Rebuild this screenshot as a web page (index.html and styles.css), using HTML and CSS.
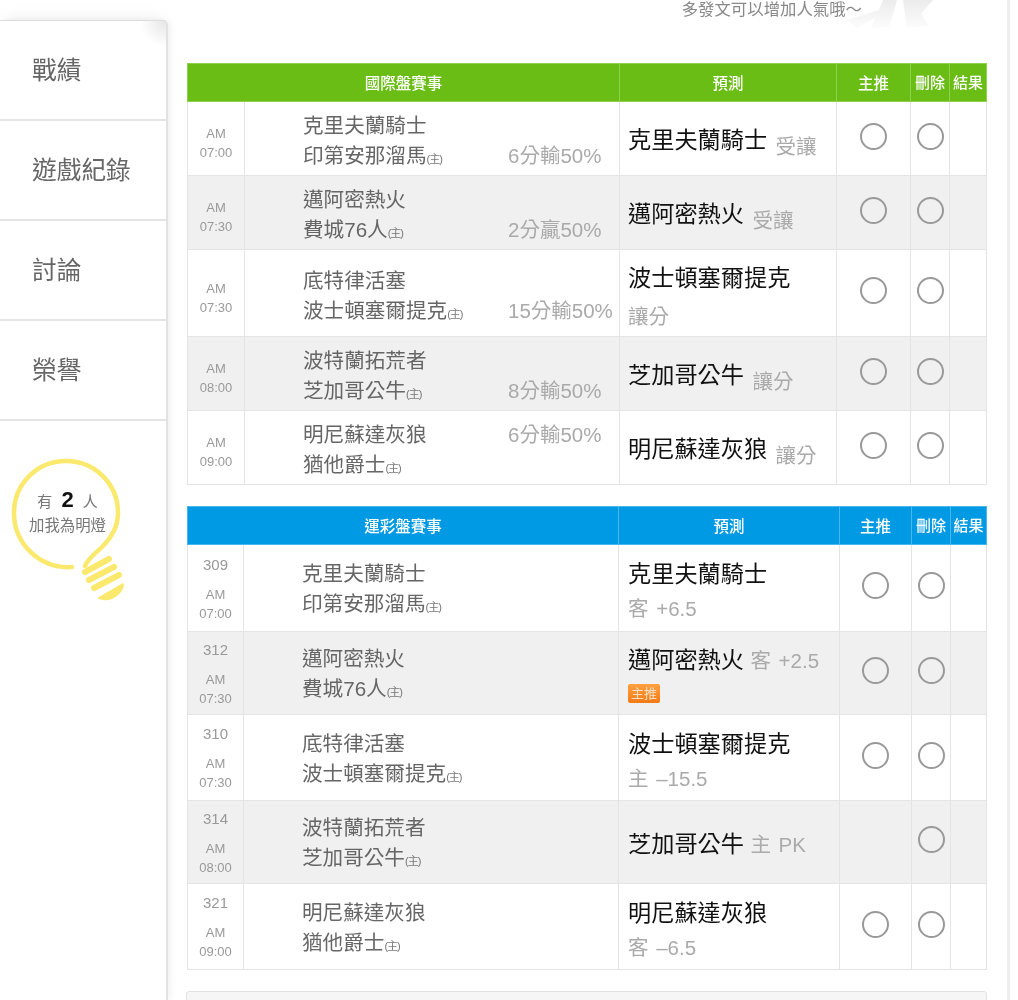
FILE: index.html
```html
<!DOCTYPE html>
<html lang="zh-Hant">
<head>
<meta charset="utf-8">
<title>賽事預測</title>
<link rel="stylesheet" href="styles.css">
</head>
<body>
<div class="page">
  <aside class="side">
    <nav class="menu">
      <a class="item">戰績</a>
      <a class="item">遊戲紀錄</a>
      <a class="item">討論</a>
      <a class="item">榮譽</a>
    </nav>
    <div class="bulb">
      <svg class="bulb-svg" width="130" height="160" viewBox="0 0 130 160" aria-hidden="true">
        <path d="M72 123 C 40 125 14 100 14 69 C 14 40 37 17 66 17 C 95 17 118 40 118 69 C 118 84 111 94 102 103 C 96 109 89 113 85 122" fill="none" stroke="#fbe96e" stroke-width="4.5" stroke-linecap="round"/>
        <g fill="none" stroke="#fbe96e" stroke-width="6" stroke-linecap="round">
          <path d="M85 128 L109 115"/>
          <path d="M89 136 L114 123"/>
          <path d="M94 144 L119 131"/>
        </g>
        <path d="M99 154 L123 140 C 123 148 112 157 103 155 Z" fill="#fbe96e" stroke="#fbe96e" stroke-width="2" stroke-linejoin="round"/>
      </svg>
      <p class="bulb-count"><span>有</span><b>2</b><span>人</span></p>
      <p class="bulb-label">加我為明燈</p>
    </div>
  </aside>

  <main class="main">
    <div class="note">
      <svg class="mark" width="100" height="32" viewBox="0 0 100 32" aria-hidden="true">
        <defs><linearGradient id="fade" x1="0" y1="0" x2="0" y2="1"><stop offset="0" stop-color="#ececec"/><stop offset="1" stop-color="#fcfcfc"/></linearGradient></defs>
        <path d="M2 20 L34 10 L30 18 L12 28 Z M38 0 L52 0 L44 28 L26 28 Z M58 0 L88 0 L76 14 L84 26 L62 28 Z" fill="url(#fade)"/>
      </svg>
      <span class="note-text">多發文可以增加人氣哦～</span>
    </div>

    <table class="games green">
      <colgroup><col class="c1"><col class="c2"><col class="c3"><col class="c4"><col class="c5"><col class="c6"></colgroup>
      <thead><tr><th colspan="2">國際盤賽事</th><th>預測</th><th>主推</th><th>刪除</th><th>結果</th></tr></thead>
      <tbody>
        <tr class="h74">
          <td class="time"><span>AM</span><span>07:00</span></td>
          <td class="teams"><div class="line"><span class="name">克里夫蘭騎士</span></div><div class="line"><span class="name">印第安那溜馬<small>(主)</small></span><span class="odds">6分輸50%</span></div></td>
          <td class="pick"><b>克里夫蘭騎士</b> <em class="low">受讓</em></td>
          <td class="mark-cell"><i class="radio"></i></td><td class="mark-cell"><i class="radio"></i></td><td></td>
        </tr>
        <tr class="h74 alt">
          <td class="time"><span>AM</span><span>07:30</span></td>
          <td class="teams"><div class="line"><span class="name">邁阿密熱火</span></div><div class="line"><span class="name">費城76人<small>(主)</small></span><span class="odds">2分贏50%</span></div></td>
          <td class="pick"><b>邁阿密熱火</b> <em class="low">受讓</em></td>
          <td class="mark-cell"><i class="radio"></i></td><td class="mark-cell"><i class="radio"></i></td><td></td>
        </tr>
        <tr class="h87">
          <td class="time"><span>AM</span><span>07:30</span></td>
          <td class="teams"><div class="line"><span class="name">底特律活塞</span></div><div class="line"><span class="name">波士頓塞爾提克<small>(主)</small></span><span class="odds">15分輸50%</span></div></td>
          <td class="pick wrapped"><b>波士頓塞爾提克</b> <em>讓分</em></td>
          <td class="mark-cell"><i class="radio"></i></td><td class="mark-cell"><i class="radio"></i></td><td></td>
        </tr>
        <tr class="h74 alt">
          <td class="time"><span>AM</span><span>08:00</span></td>
          <td class="teams"><div class="line"><span class="name">波特蘭拓荒者</span></div><div class="line"><span class="name">芝加哥公牛<small>(主)</small></span><span class="odds">8分輸50%</span></div></td>
          <td class="pick"><b>芝加哥公牛</b> <em class="low">讓分</em></td>
          <td class="mark-cell"><i class="radio"></i></td><td class="mark-cell"><i class="radio"></i></td><td></td>
        </tr>
        <tr class="h74">
          <td class="time"><span>AM</span><span>09:00</span></td>
          <td class="teams"><div class="line"><span class="name">明尼蘇達灰狼</span><span class="odds">6分輸50%</span></div><div class="line"><span class="name">猶他爵士<small>(主)</small></span></div></td>
          <td class="pick"><b>明尼蘇達灰狼</b> <em class="low">讓分</em></td>
          <td class="mark-cell"><i class="radio"></i></td><td class="mark-cell"><i class="radio"></i></td><td></td>
        </tr>
      </tbody>
    </table>

    <table class="games blue">
      <colgroup><col class="c1b"><col class="c2"><col class="c3b"><col class="c4b"><col class="c5"><col class="c6b"></colgroup>
      <thead><tr><th colspan="2">運彩盤賽事</th><th>預測</th><th>主推</th><th>刪除</th><th>結果</th></tr></thead>
      <tbody>
        <tr class="h87">
          <td class="time"><strong>309</strong><span>AM</span><span>07:00</span></td>
          <td class="teams"><div class="line"><span class="name">克里夫蘭騎士</span></div><div class="line"><span class="name">印第安那溜馬<small>(主)</small></span></div></td>
          <td class="pick"><b>克里夫蘭騎士</b> <em>客 +6.5</em></td>
          <td class="mark-cell"><i class="radio"></i></td><td class="mark-cell"><i class="radio"></i></td><td></td>
        </tr>
        <tr class="h83 alt">
          <td class="time"><strong>312</strong><span>AM</span><span>07:30</span></td>
          <td class="teams"><div class="line"><span class="name">邁阿密熱火</span></div><div class="line"><span class="name">費城76人<small>(主)</small></span></div></td>
          <td class="pick with-badge"><b>邁阿密熱火</b> <em>客 +2.5</em><div class="badge-row"><span class="badge">主推</span></div></td>
          <td class="mark-cell"><i class="radio"></i></td><td class="mark-cell"><i class="radio"></i></td><td></td>
        </tr>
        <tr class="h86">
          <td class="time"><strong>310</strong><span>AM</span><span>07:30</span></td>
          <td class="teams"><div class="line"><span class="name">底特律活塞</span></div><div class="line"><span class="name">波士頓塞爾提克<small>(主)</small></span></div></td>
          <td class="pick"><b>波士頓塞爾提克</b> <em>主 –15.5</em></td>
          <td class="mark-cell"><i class="radio"></i></td><td class="mark-cell"><i class="radio"></i></td><td></td>
        </tr>
        <tr class="h83 alt">
          <td class="time"><strong>314</strong><span>AM</span><span>08:00</span></td>
          <td class="teams"><div class="line"><span class="name">波特蘭拓荒者</span></div><div class="line"><span class="name">芝加哥公牛<small>(主)</small></span></div></td>
          <td class="pick"><b>芝加哥公牛</b> <em>主 PK</em></td>
          <td class="mark-cell"></td><td class="mark-cell"><i class="radio"></i></td><td></td>
        </tr>
        <tr class="h86">
          <td class="time"><strong>321</strong><span>AM</span><span>09:00</span></td>
          <td class="teams"><div class="line"><span class="name">明尼蘇達灰狼</span></div><div class="line"><span class="name">猶他爵士<small>(主)</small></span></div></td>
          <td class="pick"><b>明尼蘇達灰狼</b> <em>客 –6.5</em></td>
          <td class="mark-cell"><i class="radio"></i></td><td class="mark-cell"><i class="radio"></i></td><td></td>
        </tr>
      </tbody>
    </table>

    <div class="next-box"></div>
  </main>

  <div class="edge"></div>
</div>
</body>
</html>
```
FILE: styles.css
```css
* { box-sizing: border-box; }
html, body { margin: 0; height: 1000px; overflow: hidden; background: #fff; }
body { font-family: "Liberation Sans", "Noto Sans CJK TC", sans-serif; color: #666; }

.page { display: flex; height: 1000px; overflow: hidden; filter: blur(0.35px); }

/* sidebar */
.side {
  flex: 0 0 168px;
  margin-top: 20px;
  background: #fff;
  border-top: 1px solid #ddd;
  border-right: 2px solid #e2e2e2;
  border-top-right-radius: 5px;
  box-shadow: 0 -8px 14px -6px rgba(0,0,0,.07), 3px 0 6px rgba(0,0,0,.05);
  background-image: radial-gradient(circle at 100% 0, #e6e6e6 0, #fff 26px);
}
.menu { display: flex; flex-direction: column; }
.item {
  display: flex;
  align-items: center;
  height: 100px;
  padding: 0 0 5px 32px;
  border-bottom: 2px solid #e4e4e4;
  font-size: 24.7px;
  color: #666;
}
.bulb { position: relative; height: 180px; padding-top: 67px; text-align: center; width: 135px; }
.bulb-svg { position: absolute; left: 0; top: 23px; }
.bulb-count, .bulb-label { position: relative; margin: 0; color: #777; }
.bulb-count { display: flex; justify-content: center; align-items: center; gap: 9px; height: 24px; font-size: 15px; }
.bulb-count b { font-size: 22px; color: #111; }
.bulb-label { margin-top: 2px; font-size: 15.4px; line-height: 24px; }

/* main */
.main { flex: 0 0 auto; width: 820px; padding-left: 19px; }
.note { position: relative; height: 63px; width: 799px; padding-right: 124px; text-align: right; font-size: 16.4px; line-height: 18px; color: #888; }
.note-text { position: relative; }
.mark { position: absolute; left: 658px; top: 0; }

.games { width: 799px; table-layout: fixed; border-collapse: collapse; margin-bottom: 21px; }
.c1 { width: 57px; } .c2 { width: 375px; } .c3 { width: 217px; } .c4 { width: 74px; } .c5 { width: 39px; } .c6 { width: 37px; }
.c1b { width: 56px; } .c3b { width: 221px; } .c4b { width: 72px; } .c6b { width: 36px; }

.games th { height: 38px; padding: 0 0 2px; font-size: 15.5px; font-weight: 500; color: #fff; white-space: nowrap; }
.green th { background: #69bd14; border: 1px solid #8fd04c; }
.blue th { background: #0099e3; border: 1px solid #48b7ef; }
.games th:last-child, .games th:nth-last-child(2) { font-size: 15px; letter-spacing: 0; }
.games td { border: 1px solid #e4e4e4; padding: 0; }
.alt td { background: #f0f0f0; }
.h74 { height: 74px; } .h83 { height: 83px; } .h86 { height: 86px; } .h87 { height: 87px; }

.time { text-align: center; font-size: 13px; line-height: 19px; color: #999; }
.green .time { padding-top: 9px; }
.blue .time { padding-top: 1px; }
.time span { display: block; }
.time strong { display: block; margin-bottom: 10px; font-size: 15px; font-weight: 400; line-height: 20px; }

.games .teams { padding-left: 58px; font-size: 20.6px; line-height: 30px; color: #666; }
.green .teams { padding-top: 8px; }
.blue .teams { padding-top: 5px; }
.line { display: flex; }
.name { flex: 0 0 205px; white-space: nowrap; }
.name small { font-size: 11px; color: #777; letter-spacing: -1px; }
.odds { font-size: 20.5px; color: #aaa; white-space: nowrap; }

.games .pick { padding: 4px 9px 0 8px; font-size: 23.2px; line-height: 39px; color: #222; }
.games .pick.wrapped { padding-top: 9px; line-height: 38px; }
.pick b { font-weight: 400; color: #111; }
.pick em { font-style: normal; font-size: 20.5px; word-spacing: 2px; color: #aaa; white-space: nowrap; }
.pick em.low { position: relative; top: 6px; margin-left: 2px; }
.blue .pick { line-height: 34px; }
.games.blue .pick { padding: 7px 9px 0; }
.games.blue .h83 .pick { padding-top: 4px; }
.games.blue .h83 .pick.with-badge { padding-top: 0; }
.badge-row { height: 24px; margin-top: 5px; line-height: 20px; margin-bottom: -4px; }
.badge {
  display: inline-block;
  padding: 0 3px;
  height: 19px;
  margin-top: 1px;
  line-height: 19px;
  font-size: 13px;
  color: #f8e0c8;
  background: linear-gradient(#ffa040, #f47a14);
  border-radius: 2px;
  vertical-align: top;
}

.mark-cell { text-align: center; line-height: 0; }
.radio { display: inline-block; width: 27px; height: 27px; margin-bottom: 5px; border: 2px solid #999; border-radius: 50%; background: transparent; }

.next-box { height: 40px; width: 801px; margin-left: -1px; background: #f6f6f6; border: 1px solid #e2e2e2; border-radius: 3px; }

.edge { flex: 0 0 3px; margin-left: 19px; background: #eee; }
```
